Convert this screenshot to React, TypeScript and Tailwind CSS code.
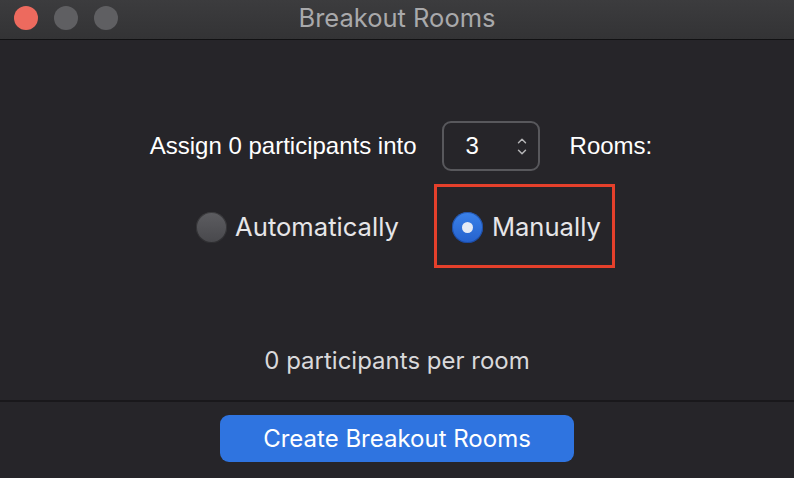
import { ChevronUp, ChevronDown } from "lucide-react";

function Radio({ checked }: { checked: boolean }) {
  if (checked) {
    return (
      <span className="flex h-[31px] w-[31px] items-center justify-center rounded-full bg-gradient-to-b from-[#3b82ea] to-[#2561cc] shadow-[inset_0_0_0_1px_rgba(20,60,140,0.6)]">
        <span className="h-[11px] w-[11px] rounded-full bg-[#e6ebf5]" />
      </span>
    );
  }
  return (
    <span className="block h-[31px] w-[31px] rounded-full bg-gradient-to-b from-[#5d5d61] to-[#48484c] shadow-[inset_0_0_0_1px_rgba(0,0,0,0.35)]" />
  );
}

export default function App() {
  return (
    <div className="flex h-[478px] w-[794px] flex-col overflow-hidden bg-[#262529] font-['Inter',sans-serif]">
      {/* title bar */}
      <div className="relative flex h-[40px] shrink-0 items-center justify-center border-b border-[#111113] bg-gradient-to-b from-[#3c3c3e] to-[#333335]">
        <div className="absolute left-[14px] top-[6px] flex gap-[16px]">
          <span className="h-[24px] w-[24px] rounded-full bg-[#ed6a5e]" />
          <span className="h-[24px] w-[24px] rounded-full bg-[#5f5f62]" />
          <span className="h-[24px] w-[24px] rounded-full bg-[#5f5f62]" />
        </div>
        <span className="pb-[2px] text-[25.5px] text-[#a9a9ab]">Breakout Rooms</span>
      </div>

      {/* body */}
      <div className="flex flex-1 flex-col items-center">
        <div className="mt-[81px] flex items-center pl-[8px] font-['Liberation_Sans',sans-serif] text-[24px] text-white">
          <span>Assign 0 participants into</span>
          <div className="ml-[25px] flex h-[50px] w-[98px] items-center justify-between rounded-[9px] border-2 border-[#58585c] pl-[22px] pr-[9px]">
            <span>3</span>
            <span className="flex flex-col items-center text-[#b5b5b7]">
              <ChevronUp size={14} strokeWidth={2.5} className="-mb-[3px]" />
              <ChevronDown size={14} strokeWidth={2.5} />
            </span>
          </div>
          <span className="ml-[30px]">Rooms:</span>
        </div>

        <div className="mt-[13px] flex items-center pl-[17px]">
          <label className="flex items-center gap-[8px] pt-[3px] text-[25.6px] text-[#e6e6e8]">
            <Radio checked={false} />
            <span>Automatically</span>
          </label>
          <div className="ml-[35px] flex h-[84px] items-center border-[3px] border-[#e5402b] pl-[15px] pr-[11px] pt-[3px]">
            <label className="flex items-center gap-[9px] text-[25.6px] text-[#e6e6e8]">
              <Radio checked={true} />
              <span>Manually</span>
            </label>
          </div>
        </div>

        <div className="mt-[78px] text-[24px] leading-[30px] text-[#d9d9db]">
          0 participants per room
        </div>
      </div>

      {/* footer */}
      <div className="flex h-[78px] shrink-0 items-start justify-center border-t-2 border-[#19181b] bg-[#262529] pt-[13px]">
        <button className="h-[47px] w-[354px] rounded-[9px] bg-[#2f74e0] text-[24px] text-white">
          Create Breakout Rooms
        </button>
      </div>
    </div>
  );
}
